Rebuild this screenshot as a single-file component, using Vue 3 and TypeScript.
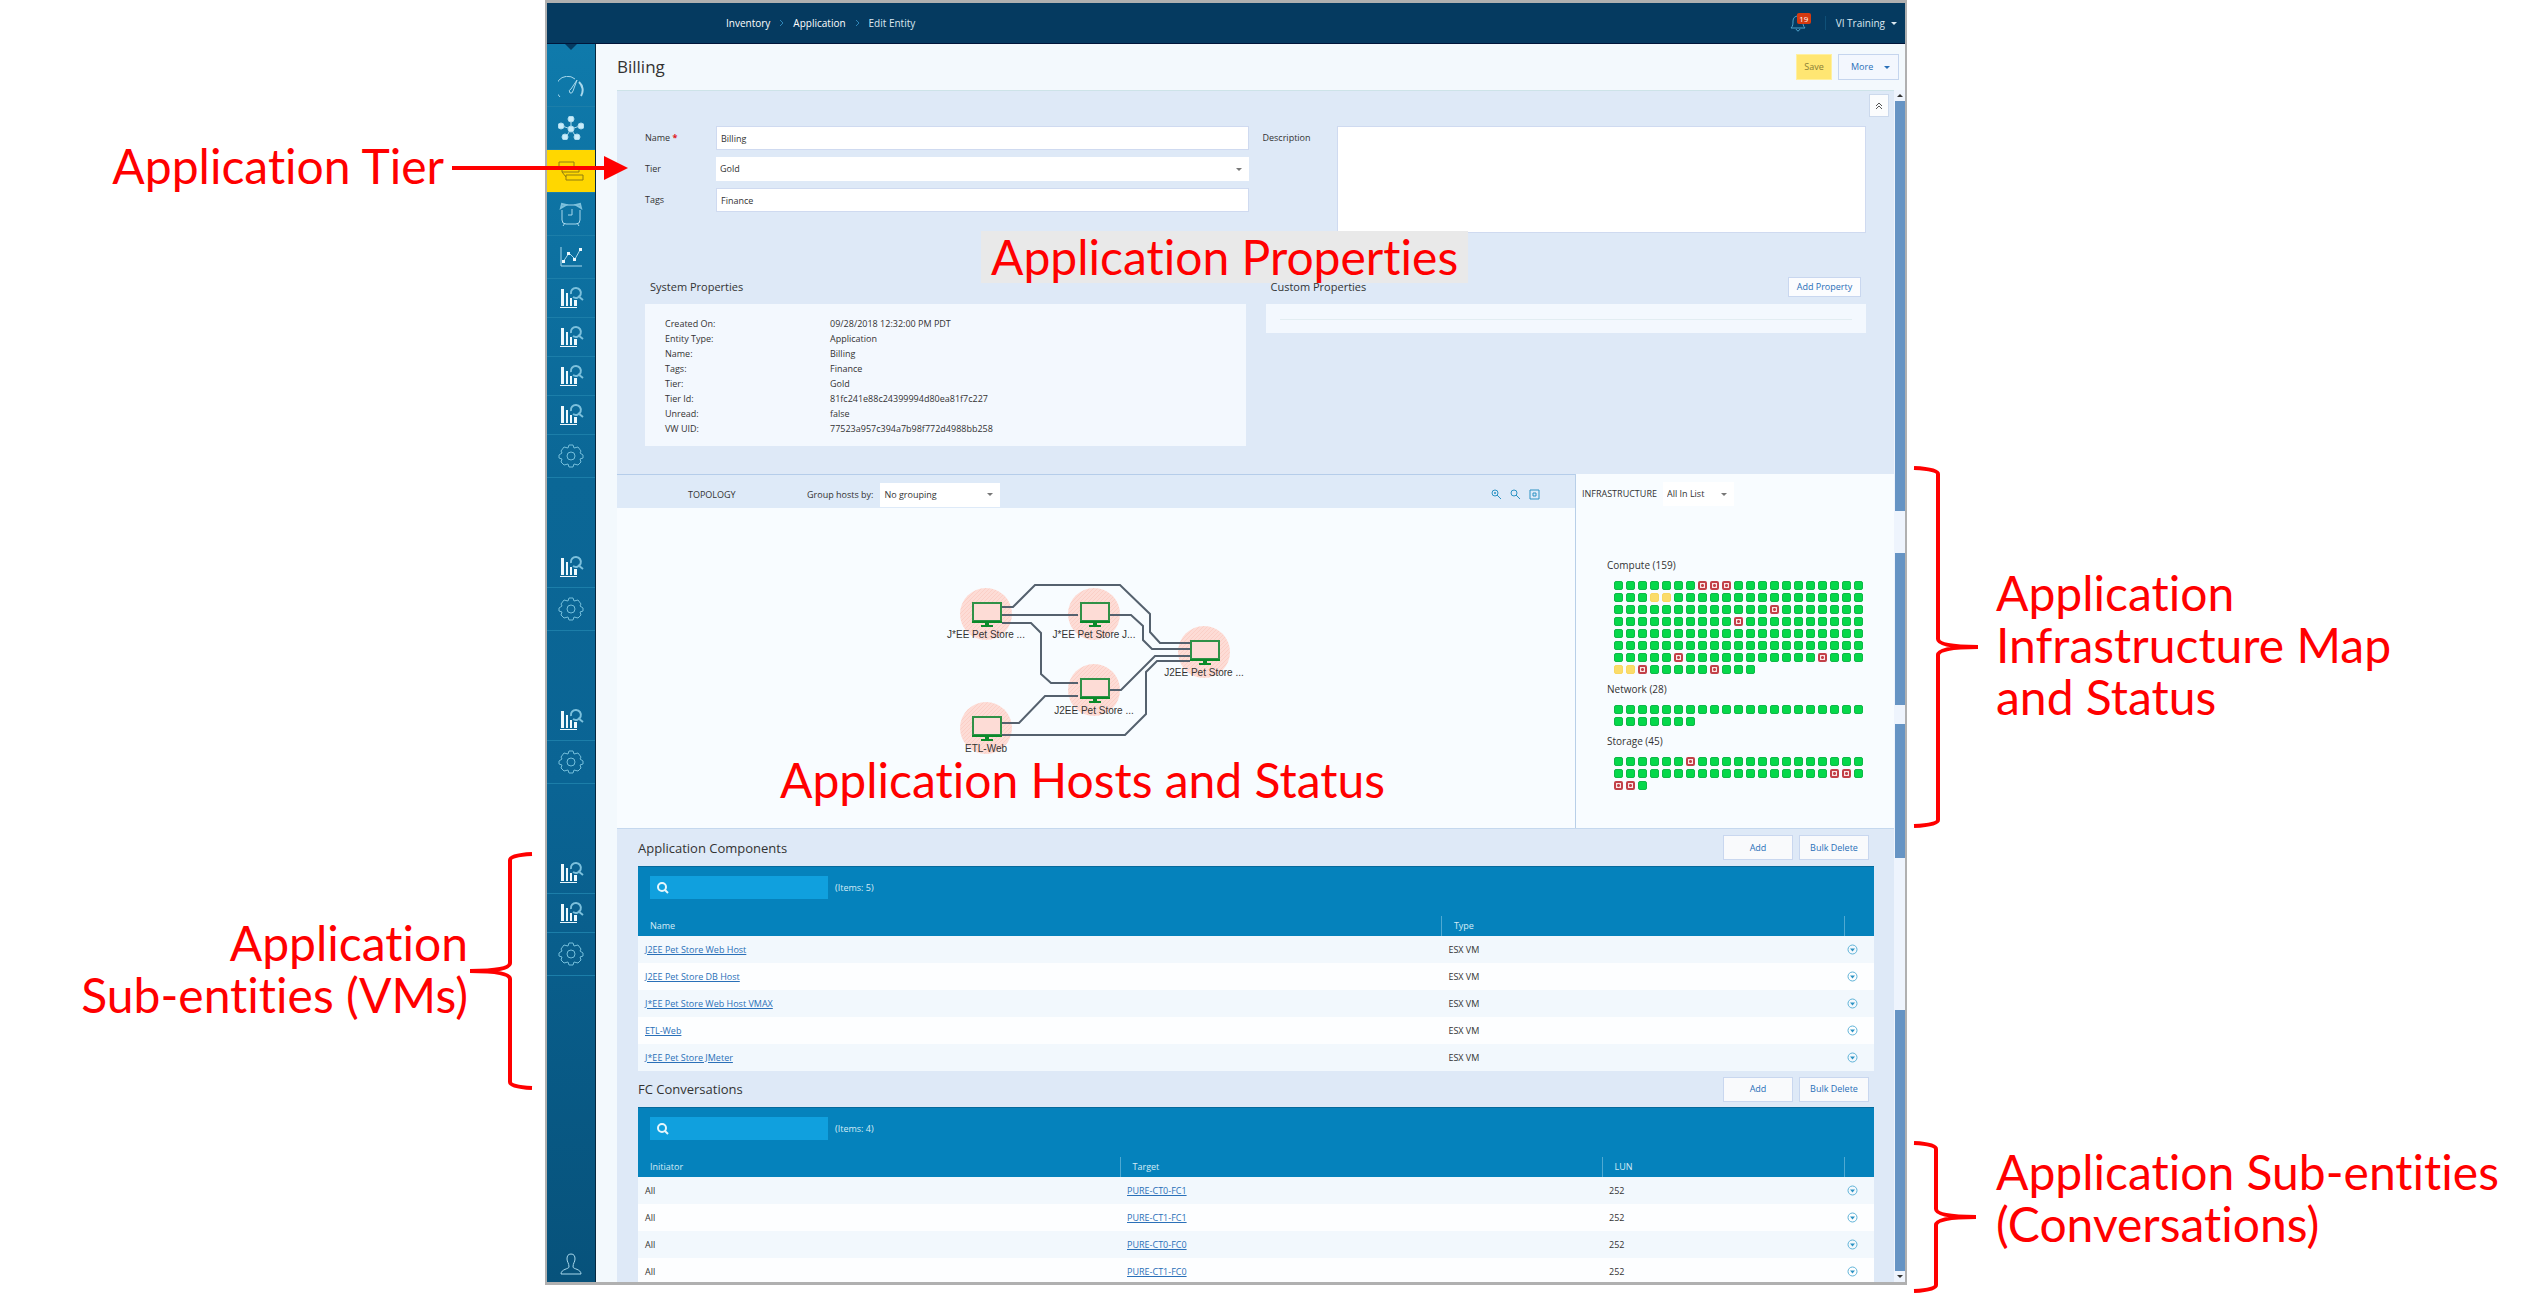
<script setup lang="ts">
import { ref } from 'vue'

type IconName = 'gauge' | 'nodes' | 'inventory' | 'alarm' | 'chart' | 'bars' | 'gear'

interface NavItem {
  icon: IconName
  label: string
  size: string
}

const navGroups: NavItem[][] = [
  [
    { icon: 'gauge', label: 'Dashboard', size: 'first' },
    { icon: 'nodes', label: 'Topology', size: 'tall' },
    { icon: 'inventory', label: 'Inventory', size: 'tall active' },
    { icon: 'alarm', label: 'Alarms', size: 'tall' },
    { icon: 'chart', label: 'Charts', size: 'tall' },
    { icon: 'bars', label: 'Reports', size: 'medium' },
    { icon: 'bars', label: 'Analysis', size: 'medium' },
    { icon: 'bars', label: 'Capacity', size: 'medium' },
    { icon: 'bars', label: 'Performance', size: 'medium' },
    { icon: 'gear', label: 'Settings', size: 'tall' },
  ],
  [
    { icon: 'bars', label: 'Compute reports', size: 'short' },
    { icon: 'gear', label: 'Compute settings', size: 'tall' },
  ],
  [
    { icon: 'bars', label: 'Network reports', size: 'short' },
    { icon: 'gear', label: 'Network settings', size: 'tall' },
  ],
  [
    { icon: 'bars', label: 'Storage reports', size: 'short' },
    { icon: 'bars', label: 'Storage analysis', size: 'medium' },
    { icon: 'gear', label: 'Storage settings', size: 'tall' },
  ],
]

const form = ref({ name: 'Billing', tier: 'Gold', tags: 'Finance', description: '' })
const grouping = ref('No grouping')
const scope = ref('All In List')
const componentSearch = ref('')
const conversationSearch = ref('')

const systemProperties: [string, string][] = [
  ['Created On:', '09/28/2018 12:32:00 PM PDT'],
  ['Entity Type:', 'Application'],
  ['Name:', 'Billing'],
  ['Tags:', 'Finance'],
  ['Tier:', 'Gold'],
  ['Tier Id:', '81fc241e88c24399994d80ea81f7c227'],
  ['Unread:', 'false'],
  ['VW UID:', '77523a957c394a7b98f772d4988bb258'],
]

// Exceptions are keyed by position; every other cell is healthy.
function statuses(count: number, critical: number[], warning: number[] = []): string[] {
  return Array.from({ length: count }, (_, i) =>
    critical.includes(i) ? 'critical' : warning.includes(i) ? 'warning' : 'ok',
  )
}

const infrastructure = [
  { name: 'Compute', cells: statuses(159, [7, 8, 9, 55, 73, 131, 143, 149, 155], [24, 25, 147, 148]) },
  { name: 'Network', cells: statuses(28, []) },
  { name: 'Storage', cells: statuses(45, [6, 39, 40, 42, 43]) },
]

const hosts = [
  { x: 56, y: 52, label: 'J*EE Pet Store ...' },
  { x: 164, y: 52, label: 'J*EE Pet Store J...' },
  { x: 274, y: 90, label: 'J2EE Pet Store ...' },
  { x: 164, y: 128, label: 'J2EE Pet Store ...' },
  { x: 56, y: 166, label: 'ETL-Web' },
]

const links = [
  'M72 47H83L105 25H190L220 54V72L230 83H260',
  'M72 55H148',
  'M180 55H201L213 66V80L222 89H260',
  'M72 63H101L111 73V114L121 123H148',
  'M180 130H191L225 96H260',
  'M72 163H89L115 136H148',
  'M72 175H195L216 154V112L227 101H260',
]

const components = [
  'J2EE Pet Store Web Host',
  'J2EE Pet Store DB Host',
  'J*EE Pet Store Web Host VMAX',
  'ETL-Web',
  'J*EE Pet Store JMeter',
]
const conversations = ['PURE-CT0-FC1', 'PURE-CT1-FC1', 'PURE-CT0-FC0', 'PURE-CT1-FC0']
</script>

<template>
  <div class="page">
    <aside class="notes notes-left">
      <div class="note tier-note">
        <span>Application Tier</span>
        <svg class="arrow" width="176" height="24" viewBox="0 0 176 24">
          <path d="M0 12H154" stroke="#f00" stroke-width="4" />
          <path d="M152 0L176 12L152 24Z" fill="#f00" />
        </svg>
      </div>
      <div class="note vm-note">
        <span>Application<br />Sub-entities (VMs)</span>
        <svg width="66" height="240" viewBox="0 0 66 240" class="bracket">
          <path d="M64 3Q42 4 42 9V112Q42 120 2 120Q42 120 42 128V231Q42 236 64 237" />
        </svg>
      </div>
    </aside>

    <div class="frame">
      <header class="topbar">
        <nav class="crumbs" aria-label="Breadcrumb">
          <a href="#">Inventory</a>
          <svg width="5" height="8" viewBox="0 0 5 8"><path d="M1 1L4 4L1 7" /></svg>
          <a href="#">Application</a>
          <svg width="5" height="8" viewBox="0 0 5 8"><path d="M1 1L4 4L1 7" /></svg>
          <span>Edit Entity</span>
        </nav>
        <div class="account">
          <button class="bell" aria-label="Notifications">
            <svg width="18" height="20" viewBox="0 0 18 20">
              <path d="M2 15C4 13 4 11 4 8C4 5 6 3 9 3C12 3 14 5 14 8C14 11 14 13 16 15ZM7 16Q9 20 11 16M9 3V1" />
            </svg>
            <span class="badge">19</span>
          </button>
          <button class="user">VI Training <span class="caret"></span></button>
        </div>
      </header>

      <div class="body">
        <nav class="sidebar" aria-label="Main">
          <div v-for="(group, g) in navGroups" :key="g" class="group">
            <a v-for="item in group" :key="item.label" href="#" :class="['item', item.size]" :aria-label="item.label">
              <svg width="26" height="24" viewBox="0 0 26 24" :class="['icon', item.icon]">
                <template v-if="item.icon === 'gauge'">
                  <path d="M2 21A11 11 0 0 1 17 3" />
                  <path d="M21 6A11 11 0 0 1 23 20" stroke-width="2" />
                  <path d="M12 17Q10 14 13 13L19 4L15 15Q14 18 12 17Z" />
                </template>
                <g v-else-if="item.icon === 'nodes'" class="solid">
                  <path d="M13 13V4M13 13L4 10M13 13L22 10M13 13L8 21M13 13L18 21" />
                  <circle cx="13" cy="13" r="3" /><circle cx="13" cy="3" r="3" />
                  <circle cx="3" cy="10" r="3" /><circle cx="23" cy="10" r="3" />
                  <circle cx="7" cy="21" r="3" /><circle cx="19" cy="21" r="3" />
                </g>
                <path v-else-if="item.icon === 'inventory'" d="M1 3H16V8H1ZM4 8V13H21V8H16M8 16H25V21H8ZM4 13L8 18" />
                <template v-else-if="item.icon === 'alarm'">
                  <path d="M8 3H18M4 8V18Q4 22 8 22H18Q22 22 22 18V8M7 21L5 24M19 21L21 24" />
                  <path d="M3 6L4 2L8 3ZM23 6L22 2L18 3Z" class="bold" />
                  <path d="M14 7V13H10" />
                </template>
                <template v-else-if="item.icon === 'chart'">
                  <path d="M3 2V21H24M5 17L11 8L17 14L22 5" />
                  <path class="dots" d="M4 15h3v3h-3zM9 7h3v3h-3zM15 13h3v3h-3zM21 3h3v3h-3z" />
                </template>
                <template v-else-if="item.icon === 'bars'">
                  <path class="dots" d="M3 3h3v17h-3zM8 7h2v13h-2zM12 12h2v8h-2zM16 14h3v6h-3zM2 21h17v1h-17z" />
                  <path d="M13 8A5 5 0 1 1 15 11M20 10L25 14" class="bold" />
                </template>
                <template v-else>
                  <path d="M11 1H15L16 4L20 3L23 7L22 9L25 11V14L22 15L23 18L20 21L16 20L15 23H11L10 20L6 21L3 18L4 15L1 14V11L4 9L3 7L6 3L10 4Z" />
                  <circle cx="13" cy="12" r="4" />
                </template>
              </svg>
            </a>
          </div>
          <a href="#" class="profile" aria-label="Profile">
            <svg width="24" height="24" viewBox="0 0 24 24" class="icon">
              <path d="M12 2C15 2 16 4 16 7C16 10 14 11 14 15C14 17 22 17 22 22H2C2 17 10 17 10 15C10 11 8 10 8 7C8 4 9 2 12 2Z" />
            </svg>
          </a>
        </nav>

        <main class="main">
          <div class="page-head">
            <h1>Billing</h1>
            <button class="save">Save</button>
            <button class="more">More <span class="caret"></span></button>
          </div>

          <div class="scroller">
            <div class="content">
              <section class="properties">
                <button class="collapse" aria-label="Collapse">
                  <svg width="8" height="8" viewBox="0 0 8 8"><path d="M1 4L4 1L7 4M1 7L4 4L7 7" /></svg>
                </button>
                <div class="fields">
                  <div class="fields-left">
                    <label for="name">Name <b>*</b></label>
                    <input id="name" v-model="form.name" />
                    <label for="tier">Tier</label>
                    <div class="select">
                      <select id="tier" v-model="form.tier"><option>Gold</option><option>Silver</option></select>
                      <span class="caret"></span>
                    </div>
                    <label for="tags">Tags</label>
                    <input id="tags" v-model="form.tags" />
                  </div>
                  <div class="fields-right">
                    <label for="description">Description</label>
                    <textarea id="description" v-model="form.description"></textarea>
                  </div>
                </div>
                <div class="prop-columns">
                  <div>
                    <div class="prop-head"><h2>System Properties</h2></div>
                    <dl>
                      <template v-for="[key, value] in systemProperties" :key="key">
                        <dt>{{ key }}</dt>
                        <dd>{{ value }}</dd>
                      </template>
                    </dl>
                  </div>
                  <div>
                    <div class="prop-head">
                      <h2>Custom Properties</h2>
                      <button class="add-property">Add Property</button>
                    </div>
                    <div class="custom-box"><hr /></div>
                  </div>
                </div>
                <p class="note over props-note">Application Properties</p>
              </section>

              <div class="maps">
                <section class="topology">
                  <div class="topology-head">
                    <h3>TOPOLOGY</h3>
                    <label for="grouping">Group hosts by:</label>
                    <div class="select grouping">
                      <select id="grouping" v-model="grouping"><option>No grouping</option></select>
                      <span class="caret"></span>
                    </div>
                    <div class="tools">
                      <button aria-label="Zoom in">
                        <svg width="11" height="11" viewBox="0 0 11 11"><circle cx="4" cy="4" r="3" /><path d="M6 6L10 10M3 4H5M4 3V5" /></svg>
                      </button>
                      <button aria-label="Zoom out">
                        <svg width="11" height="11" viewBox="0 0 11 11"><circle cx="4" cy="4" r="3" /><path d="M6 6L10 10" /></svg>
                      </button>
                      <button aria-label="Fit to view">
                        <svg width="11" height="11" viewBox="0 0 11 11"><path d="M1 1H10V10H1ZM4 4H7V7H4Z" /></svg>
                      </button>
                    </div>
                  </div>
                  <div class="canvas">
                    <svg width="330" height="210" viewBox="0 0 330 210">
                      <defs>
                        <pattern id="hatch" width="4" height="4" patternUnits="userSpaceOnUse">
                          <rect width="4" height="4" fill="#fddcd6" />
                          <path d="M0 4L4 0" stroke="#fbcfc6" />
                        </pattern>
                      </defs>
                      <circle v-for="(h, i) in hosts" :key="'c' + i" :cx="h.x" :cy="h.y + 2" r="26" fill="url(#hatch)" />
                      <path v-for="d in links" :key="d" :d="d" class="link" />
                      <g v-for="(h, i) in hosts" :key="'h' + i">
                        <rect :x="h.x - 13" :y="h.y - 9" width="28" height="18" class="screen" />
                        <path :d="`M${h.x - 14} ${h.y + 9}h30v2h-30zM${h.x - 1} ${h.y + 11}h4v2h4v2h-12v-2h4z`" fill="#0b8a2a" />
                        <text :x="h.x" :y="h.y + 26">{{ h.label }}</text>
                      </g>
                    </svg>
                    <p class="note over hosts-note">Application Hosts and Status</p>
                  </div>
                </section>

                <section class="infra">
                  <div class="infra-head">
                    <label for="scope">INFRASTRUCTURE</label>
                    <div class="select scope">
                      <select id="scope" v-model="scope"><option>All In List</option></select>
                      <span class="caret"></span>
                    </div>
                  </div>
                  <div class="infra-body">
                    <template v-for="group in infrastructure" :key="group.name">
                      <h4>{{ group.name }} ({{ group.cells.length }})</h4>
                      <div class="cells">
                        <i v-for="(c, i) in group.cells" :key="i" :class="c"></i>
                      </div>
                    </template>
                  </div>
                </section>
              </div>

              <section class="list">
                <div class="list-head">
                  <h2>Application Components</h2>
                  <button>Add</button>
                  <button>Bulk Delete</button>
                </div>
                <div class="toolbar">
                  <div class="search">
                    <svg width="12" height="12" viewBox="0 0 12 12"><circle cx="5" cy="5" r="4" /><path d="M8 8L11 11" /></svg>
                    <input v-model="componentSearch" aria-label="Search components" />
                  </div>
                  <span>(Items: 5)</span>
                </div>
                <table class="components">
                  <thead>
                    <tr><th>Name</th><th>Type</th><th></th></tr>
                  </thead>
                  <tbody>
                    <tr v-for="name in components" :key="name">
                      <td><a href="#">{{ name }}</a></td>
                      <td>ESX VM</td>
                      <td class="action">
                        <button aria-label="Actions">
                          <svg width="11" height="11" viewBox="0 0 22 22"><circle cx="11" cy="11" r="9" /><path d="M6 9H16L11 15Z" /></svg>
                        </button>
                      </td>
                    </tr>
                  </tbody>
                </table>
              </section>

              <section class="list">
                <div class="list-head">
                  <h2>FC Conversations</h2>
                  <button>Add</button>
                  <button>Bulk Delete</button>
                </div>
                <div class="toolbar">
                  <div class="search">
                    <svg width="12" height="12" viewBox="0 0 12 12"><circle cx="5" cy="5" r="4" /><path d="M8 8L11 11" /></svg>
                    <input v-model="conversationSearch" aria-label="Search conversations" />
                  </div>
                  <span>(Items: 4)</span>
                </div>
                <table class="conversations">
                  <thead>
                    <tr><th>Initiator</th><th>Target</th><th>LUN</th><th></th></tr>
                  </thead>
                  <tbody>
                    <tr v-for="target in conversations" :key="target">
                      <td>All</td>
                      <td><a href="#">{{ target }}</a></td>
                      <td>252</td>
                      <td class="action">
                        <button aria-label="Actions">
                          <svg width="11" height="11" viewBox="0 0 22 22"><circle cx="11" cy="11" r="9" /><path d="M6 9H16L11 15Z" /></svg>
                        </button>
                      </td>
                    </tr>
                  </tbody>
                </table>
              </section>
            </div>

            <div class="scrollbar">
              <span class="tip up"></span>
              <span class="thumb" style="flex-grow: 410"></span>
              <span class="gap" style="flex-grow: 42"></span>
              <span class="thumb" style="flex-grow: 152"></span>
              <span class="gap" style="flex-grow: 20"></span>
              <span class="thumb" style="flex-grow: 134"></span>
              <span class="gap" style="flex-grow: 152"></span>
              <span class="thumb" style="flex-grow: 261"></span>
              <span class="tip down"></span>
            </div>
          </div>
        </main>
      </div>
    </div>

    <aside class="notes notes-right">
      <div class="note infra-note">
        <svg width="68" height="364" viewBox="0 0 68 364" class="bracket">
          <path d="M2 3Q26 4 26 9V174Q26 182 66 182Q26 182 26 190V355Q26 360 2 361" />
        </svg>
        <span>Application<br />Infrastructure Map<br />and Status</span>
      </div>
      <div class="note conversation-note">
        <svg width="68" height="154" viewBox="0 0 68 154" class="bracket">
          <path d="M2 3Q24 4 24 9V69Q24 77 64 77Q24 77 24 85V145Q24 150 2 151" />
        </svg>
        <span>Application Sub-entities<br />(Conversations)</span>
      </div>
    </aside>
  </div>
</template>

<style>
body {
  margin: 0;
  background: #fff;
}
</style>

<style scoped>
.page {
  display: grid;
  grid-template-columns: 545fr 1362fr 639fr;
  align-items: start;
  font: 9px/14px "Open Sans", "Noto Sans", sans-serif;
  color: #333;
}
.page * {
  box-sizing: border-box;
}
button,
input,
select,
textarea {
  font: inherit;
  color: inherit;
  margin: 0;
  padding: 0;
  border: 0;
  border-radius: 0;
  background: none;
}
h1,
h2,
h3,
h4,
p,
dl,
dd {
  margin: 0;
  font-weight: 400;
}
svg {
  display: block;
  flex: none;
  fill: none;
}

/* Callouts */
.note {
  font: 48px/52px Lato, "Noto Sans", sans-serif;
  font-variant-ligatures: none;
  color: #f00;
  white-space: nowrap;
}
.notes {
  display: flex;
  flex-direction: column;
}
.notes .note {
  display: flex;
  align-items: center;
}
.notes span {
  padding-bottom: 4px;
}
.notes-left {
  align-items: flex-end;
  padding: 140px 11px 0 0;
}
.tier-note {
  position: relative;
  z-index: 2;
  gap: 8px;
  margin-right: -94px;
}
.vm-note {
  margin-top: 655px;
  text-align: right;
}
.notes-right {
  padding: 465px 0 0 5px;
}
.notes-right .note {
  gap: 16px;
}
.notes-right .conversation-note {
  margin-top: 311px;
  align-items: flex-start;
}
.conversation-note span {
  padding-top: 6px;
}
.bracket path {
  stroke: #f00;
  stroke-width: 4;
}
.over {
  position: absolute;
  z-index: 1;
}
.props-note {
  top: 140px;
  left: 364px;
  padding: 0 10px;
  background: #e9e9e9;
}
.hosts-note {
  top: 246px;
  left: 163px;
}

/* Window */
.frame {
  border: 2px solid #b0b0b0;
  border-top-width: 3px;
  border-bottom-width: 3px;
}
.topbar {
  display: flex;
  align-items: center;
  justify-content: space-between;
  height: 41px;
  padding: 0 8px 0 179px;
  background: #053a60;
  border-bottom: 1px solid #00163a;
  color: #dce8f0;
  font-size: 10px;
}
.crumbs,
.account {
  display: flex;
  align-items: center;
}
.crumbs {
  gap: 9px;
}
.crumbs a {
  color: #fff;
  text-decoration: none;
}
.crumbs path {
  stroke: #2f86b8;
}
.bell {
  position: relative;
  padding-right: 18px;
}
.bell path {
  stroke: #4fa3cc;
}
.badge {
  position: absolute;
  top: 0;
  left: 8px;
  width: 14px;
  height: 11px;
  background: #d63a10;
  border-radius: 2px;
  font-size: 8px;
  line-height: 11px;
  color: #fff;
}
.user {
  display: flex;
  align-items: center;
  gap: 6px;
  padding-left: 10px;
  border-left: 1px solid #0f5078;
}
.caret {
  border: 3px solid transparent;
  border-top-color: currentColor;
  border-bottom: 0;
}
.body {
  display: flex;
}

/* Sidebar */
.sidebar {
  position: relative;
  display: flex;
  flex-direction: column;
  gap: 75px;
  width: 49px;
  flex: none;
  background: linear-gradient(#0f7aab, #0b6796 35%, #0a6494 60%, #07527b);
  border-right: 1px solid #06283f;
}
.sidebar::before {
  content: "";
  position: absolute;
  top: 0;
  left: 18px;
  border: 6px solid transparent;
  border-top-color: #053a60;
  border-bottom: 0;
}
.item {
  display: flex;
  align-items: center;
  justify-content: center;
  height: 43px;
  border-bottom: 1px solid #1c7ea9;
}
.item.first {
  height: 63px;
  padding-top: 26px;
}
.item.medium {
  height: 39px;
}
.item.short {
  height: 35px;
  padding-bottom: 6px;
}
.item.active {
  background: #ffd700;
}
.icon path,
.icon circle {
  stroke: #a8d8ec;
}
.icon.gear path,
.icon.gear circle {
  stroke: #74bedb;
}
.icon.inventory path {
  stroke: #8f7d10;
}
.icon .solid circle {
  fill: #c8ecfa;
}
.icon .bold {
  stroke-width: 2;
  stroke: #7cc0dc;
}
.icon .dots {
  fill: #eef9fd;
  stroke: none;
}
.profile {
  display: flex;
  justify-content: center;
  margin-top: auto;
  padding-bottom: 6px;
}

/* Main */
.main {
  flex: 1;
  min-width: 0;
  padding-left: 21px;
  background: #f3f9fd;
}
.page-head {
  display: flex;
  align-items: center;
  height: 46px;
  padding-right: 6px;
}
h1 {
  flex: 1;
  font-size: 17px;
  line-height: 24px;
}
.save,
.more {
  height: 26px;
  border: 1px solid #fff0a0;
}
.save {
  width: 36px;
  margin-right: 6px;
  background: #ffe672;
  color: #8a7d35;
}
.more {
  display: flex;
  align-items: center;
  justify-content: space-between;
  width: 61px;
  padding: 0 8px 0 12px;
  border-color: #c5d5ee;
  background: #f3f7fe;
  color: #2a70b8;
}
.scroller {
  display: flex;
  height: 1192px;
}
.content {
  flex: 1;
  min-width: 0;
  overflow: hidden;
  background: #dee9f7;
}
.scrollbar {
  display: flex;
  flex-direction: column;
  width: 11px;
  padding-left: 1px;
  background: #eef4fd;
}
.scrollbar span {
  flex-basis: 0;
}
.thumb {
  background: #6694c4;
}
.scrollbar .tip {
  flex: none;
  align-self: center;
  margin: 4px 0;
  border: 3px solid transparent;
}
.scrollbar .tip.up {
  border-bottom-color: #333;
  border-top: 0;
}
.scrollbar .tip.down {
  border-top-color: #333;
  border-bottom: 0;
}

.properties {
  position: relative;
  height: 384px;
  padding: 35px 28px 0;
  border-top: 1px solid #cde3e8;
}
.collapse {
  position: absolute;
  top: 3px;
  right: 5px;
  display: grid;
  place-items: center;
  width: 20px;
  height: 23px;
  background: #fbfcfd;
  border: 1px solid #ccd9ec;
}
.collapse path {
  stroke: #555;
}
.fields,
.prop-columns {
  display: grid;
  grid-template-columns: 1fr 1fr;
  gap: 14px;
}
.fields-left {
  display: grid;
  grid-template-columns: 71px 1fr;
  grid-auto-rows: 24px;
  row-gap: 7px;
  align-items: center;
}
.fields-left b {
  color: #e02020;
}
.fields-left input,
textarea {
  height: 24px;
  width: 100%;
  padding: 0 4px;
  background: #fff;
  border: 1px solid #cfdaf0;
}
.select {
  position: relative;
  display: flex;
  align-items: center;
  height: 24px;
  background: #fff;
}
select {
  appearance: none;
  width: 100%;
  height: 100%;
  padding: 0 4px;
}
.select .caret {
  position: absolute;
  right: 7px;
  color: #777;
  pointer-events: none;
}
.fields-right {
  display: grid;
  grid-template-columns: 74px 1fr;
}
.fields-right label {
  padding-top: 5px;
}
textarea {
  display: block;
  height: 107px;
  resize: none;
}
.prop-columns {
  gap: 20px;
  margin-top: 44px;
}
.prop-head {
  display: flex;
  align-items: center;
  justify-content: space-between;
  height: 20px;
  padding: 0 5px;
  margin-bottom: 7px;
}
.prop-head h2 {
  font-size: 11px;
  line-height: 12px;
}
.add-property {
  width: 73px;
  height: 20px;
  background: #fbfcfe;
  border: 1px solid #c9d7ef;
  color: #2a70b8;
}
dl {
  display: grid;
  grid-template-columns: 165px 1fr;
  padding: 12px 20px 10px;
  line-height: 15px;
  background: #f3f8fe;
}
.custom-box {
  height: 29px;
  padding: 15px 14px 0;
  background: #f3f8fe;
}
hr {
  margin: 0;
  border: 0;
  border-top: 1px solid #e2edf2;
}

.maps {
  display: grid;
  grid-template-columns: 1fr 318px;
  height: 355px;
  border-bottom: 1px solid #c5d8ee;
  background: #f8fcff;
}
.topology {
  border-right: 1px solid #b8cfe8;
}
.topology-head {
  display: flex;
  align-items: center;
  height: 34px;
  padding: 6px 35px 0 71px;
  background: #deeaf8;
  border-top: 1px solid #b5cdea;
}
.topology-head h3 {
  width: 119px;
  font-size: 9px;
}
.grouping {
  width: 120px;
  margin-left: 7px;
}
.tools {
  display: flex;
  gap: 8px;
  margin-left: auto;
}
.tools svg * {
  stroke: #2c93c4;
}
.canvas {
  position: relative;
  display: flex;
  justify-content: center;
  padding: 52px 3px 0 0;
}
.link {
  stroke: #55616e;
  stroke-width: 2;
}
.screen {
  fill: #fddcd6;
  stroke: #2f9147;
  stroke-width: 2;
}
text {
  font: 10px "Liberation Sans", sans-serif;
  fill: #333;
  text-anchor: middle;
}
.infra-head {
  display: flex;
  align-items: center;
  height: 34px;
  gap: 6px;
  padding: 6px 0 0 6px;
}
.scope {
  width: 71px;
  background: #fff;
}
.infra-body {
  padding: 50px 0 0 31px;
}
h4 {
  font-size: 10px;
  line-height: 14px;
}
.cells {
  display: grid;
  grid-template-columns: repeat(21, 9px);
  grid-auto-rows: 9px;
  gap: 3px;
  margin: 9px 7px 8px;
}
.cells i {
  border-radius: 2px;
  background: #05d84a;
  border: 1px solid #10b848;
}
.cells .warning {
  background: #fbdc6a;
  border-color: #f8d860;
}
.cells .critical {
  background: radial-gradient(circle, #c24048 1px, #fae6e6 2px);
  border: 2px solid #c24048;
}

/* Lists */
.list {
  padding: 0 20px 0 21px;
}
.list-head {
  display: flex;
  align-items: center;
  gap: 6px;
  height: 37px;
  padding: 0 5px 0 0;
}
.list + .list .list-head {
  height: 36px;
}
.list-head h2 {
  flex: 1;
  font-size: 13px;
  line-height: 18px;
}
.list-head button {
  width: 70px;
  height: 25px;
  background: #f9fafc;
  border: 1px solid #c9d7ef;
  color: #2a70b8;
}
.toolbar {
  display: flex;
  align-items: flex-start;
  gap: 7px;
  height: 50px;
  padding: 9px 12px 0;
  background: #0582bc;
  border-top: 1px solid #066a9c;
  color: #d5ecf6;
  line-height: 24px;
}
.search {
  display: flex;
  align-items: center;
  gap: 6px;
  width: 178px;
  height: 23px;
  padding-left: 7px;
  background: #10a0de;
}
.search svg * {
  stroke: #e6f6fc;
  stroke-width: 2;
}
.search input {
  flex: 1;
  min-width: 0;
}
table {
  width: 100%;
  border-collapse: collapse;
  table-layout: fixed;
}
.components th:first-child {
  width: 65%;
}
.conversations th:nth-child(1),
.conversations th:nth-child(2) {
  width: 39%;
}
th:last-child {
  width: 30px;
}
th {
  height: 20px;
  padding: 0 12px;
  background: #0582bc;
  border-left: 1px solid #4fa9d2;
  color: #d5ecf6;
  font-weight: 400;
  text-align: left;
}
th:first-child {
  border-left: 0;
}
td {
  height: 27px;
  padding: 0 7px;
  background: #fdfeff;
}
tbody tr:nth-child(odd) td {
  background: #f2f8fd;
}
td a {
  color: #2a70b8;
}
.action {
  padding: 0 3px;
}
.action button {
  display: block;
}
.action svg circle {
  stroke: #5fb3d8;
  stroke-width: 2;
}
.action svg path {
  fill: #2c93c4;
}
</style>
